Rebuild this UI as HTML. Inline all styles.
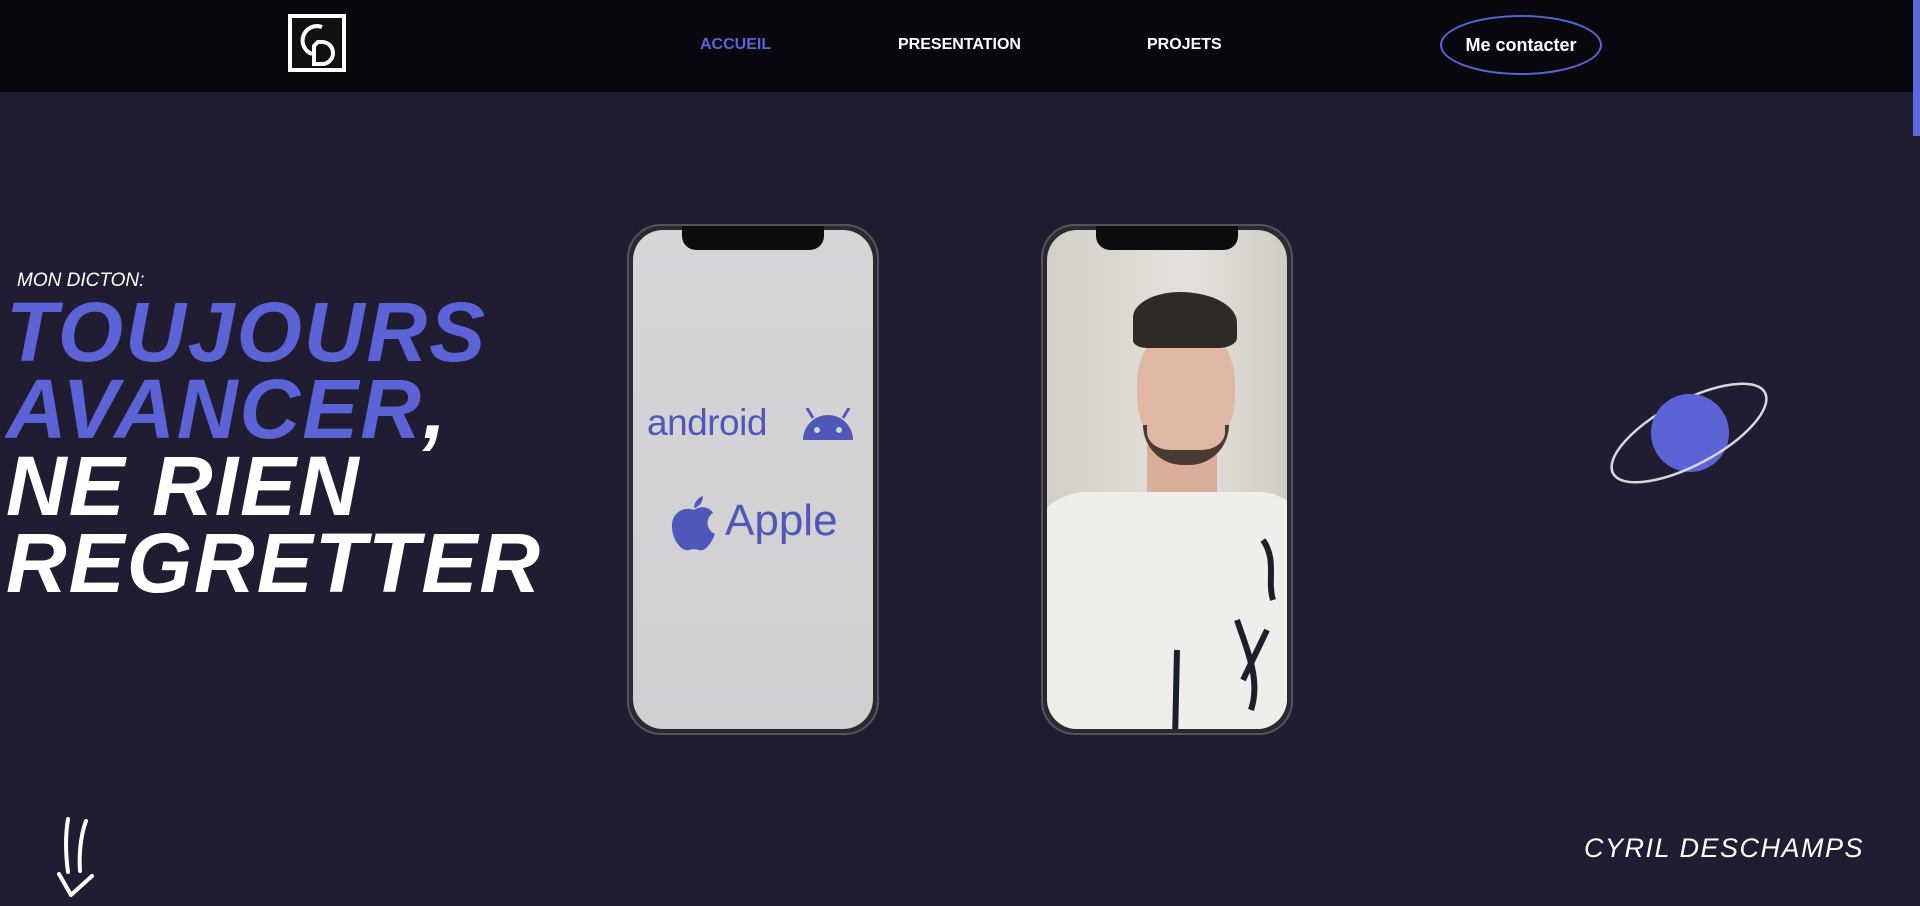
<!DOCTYPE html>
<html><head><meta charset="utf-8"><style>
*{margin:0;padding:0;box-sizing:border-box}
body{width:1920px;height:906px;overflow:hidden;background:#201d33;font-family:"Liberation Sans",sans-serif;position:relative}
.hdr{position:absolute;left:0;top:0;width:1913px;height:92px;background:#09080e}
.nav{position:absolute;top:36px;font-weight:bold;font-size:16px;color:#fff}
.btn{position:absolute;left:1440px;top:15px;width:162px;height:60px;border:2px solid #5b63d6;border-radius:50%;color:#fff;font-weight:bold;font-size:18px;text-align:center;line-height:56px}
.sb{position:absolute;left:1913px;top:0;width:7px;height:136px;background:#5f68db}
.big{position:absolute;left:6px;font-weight:bold;font-style:italic;font-size:84px;line-height:77px;letter-spacing:2px}
.phone{position:absolute;top:224px;width:252px;height:511px;border-radius:34px;background:#2a2a2e;border:2px solid #55545a;overflow:hidden}
.scr{position:absolute;left:4px;top:4px;right:4px;bottom:4px;border-radius:30px;overflow:hidden}
.notch{position:absolute;left:50%;top:0;width:142px;height:24px;margin-left:-71px;background:#0c0c0e;border-radius:0 0 14px 14px}
</style></head><body>
<div class="hdr"></div>
<svg style="position:absolute;left:288px;top:14px" width="58" height="58" viewBox="0 0 58 58">
<rect x="2" y="2" width="54" height="54" fill="#111" stroke="#fff" stroke-width="4"/>
<path d="M34 13 A13 13 0 1 0 24 40" fill="none" stroke="#fff" stroke-width="4"/>
<path d="M26 50 L26 32 L30 28 L34 28 A11 11 0 0 1 34 50 Z" fill="none" stroke="#fff" stroke-width="4"/>
</svg>
<div class="nav" style="left:700px;color:#5b63d6">ACCUEIL</div>
<div class="nav" style="left:898px">PRESENTATION</div>
<div class="nav" style="left:1147px">PROJETS</div>
<div class="btn">Me contacter</div>
<div class="sb"></div>

<div style="position:absolute;left:17px;top:270px;color:#fff;font-style:italic;font-size:19px">MON DICTON:</div>
<div class="big" style="top:294px;color:#5b63d6">TOUJOURS</div>
<div class="big" style="top:371px;color:#5b63d6">AVANCER<span style="color:#fff">,</span></div>
<div class="big" style="top:448px;color:#fff">NE RIEN</div>
<div class="big" style="top:525px;color:#fff">REGRETTER</div>

<div class="phone" style="left:627px"><div class="scr" style="background:linear-gradient(#d6d5d8,#cfced1)">
<div style="position:absolute;left:14px;top:172px;font-size:37px;color:#4f57b8;letter-spacing:-0.5px">android</div>
<svg style="position:absolute;left:168px;top:178px" width="54" height="34" viewBox="0 0 54 34"><path d="M2 32 A25 25 0 0 1 52 32 Z" fill="#4f57b8"/><path d="M12 10 L6 0 M42 10 L48 0" stroke="#4f57b8" stroke-width="3"/><circle cx="16" cy="22" r="3" fill="#d5d4d7"/><circle cx="38" cy="22" r="3" fill="#d5d4d7"/></svg>
<svg style="position:absolute;left:38px;top:266px" width="46" height="56" viewBox="0 0 46 56"><path d="M23 14 C28 10 38 10 42 17 C34 22 35 34 44 38 C40 48 34 56 28 54 C25 53 21 53 18 54 C10 56 0 42 1 28 C2 16 14 10 23 14 Z" fill="#4f57b8"/><path d="M23 12 C23 6 28 1 32 0 C32 6 28 11 23 12 Z" fill="#4f57b8"/></svg>
<div style="position:absolute;left:92px;top:266px;font-size:44px;color:#4f57b8">Apple</div>
</div><div class="notch"></div></div>

<div class="phone" style="left:1041px"><div class="scr" style="background:linear-gradient(90deg,#d3cfc8,#e4e1dc 60%,#cfcbc4)">
<div style="position:absolute;left:100px;top:215px;width:70px;height:60px;background:#d9ad97"></div>
<div style="position:absolute;left:90px;top:100px;width:98px;height:130px;background:#e0b7a2;border-radius:40% 40% 50% 50%"></div>
<div style="position:absolute;left:96px;top:195px;width:86px;height:40px;background:#4a3a34;border-radius:0 0 40px 40px"></div>
<div style="position:absolute;left:100px;top:160px;width:78px;height:60px;background:#e0b7a2;border-radius:30%"></div>
<div style="position:absolute;left:86px;top:62px;width:104px;height:56px;background:#2e2a28;border-radius:50% 60% 20% 15%"></div>
<div style="position:absolute;left:-20px;top:262px;width:290px;height:300px;background:#f0eeeb;border-radius:60px 60px 0 0"></div>
<svg style="position:absolute;left:0;top:250px" width="244" height="260" viewBox="0 0 244 260"><path d="M216 60 C230 80 220 100 226 120 M190 140 C200 170 214 200 204 230 M220 150 L196 200 M130 170 L128 260" stroke="#1c1f2a" stroke-width="6" fill="none"/></svg>
</div><div class="notch"></div></div>

<svg style="position:absolute;left:1600px;top:370px" width="180" height="130" viewBox="0 0 180 130">
<circle cx="90" cy="63" r="39" fill="#5b63d6"/>
<ellipse cx="89" cy="63" rx="86" ry="32" transform="rotate(-28 89 63)" fill="none" stroke="#d8d8de" stroke-width="2.5"/>
<clipPath id="c"><rect x="0" y="0" width="180" height="58"/></clipPath>
<circle cx="90" cy="63" r="39" fill="#5b63d6" clip-path="url(#c)"/>
</svg>

<div style="position:absolute;left:1584px;top:833px;color:#fff;font-style:italic;font-size:27px;letter-spacing:1.5px">CYRIL DESCHAMPS</div>
<svg style="position:absolute;left:50px;top:812px" width="50" height="94" viewBox="0 0 50 94"><path d="M18 7 C15 25 16 45 18 60 M36 9 C30 25 29 45 30 59" stroke="#fff" stroke-width="4" stroke-linecap="round" fill="none"/><path d="M9 62 L21 83 L42 64" stroke="#fff" stroke-width="4" stroke-linecap="round" stroke-linejoin="round" fill="none"/></svg>
</body></html>
